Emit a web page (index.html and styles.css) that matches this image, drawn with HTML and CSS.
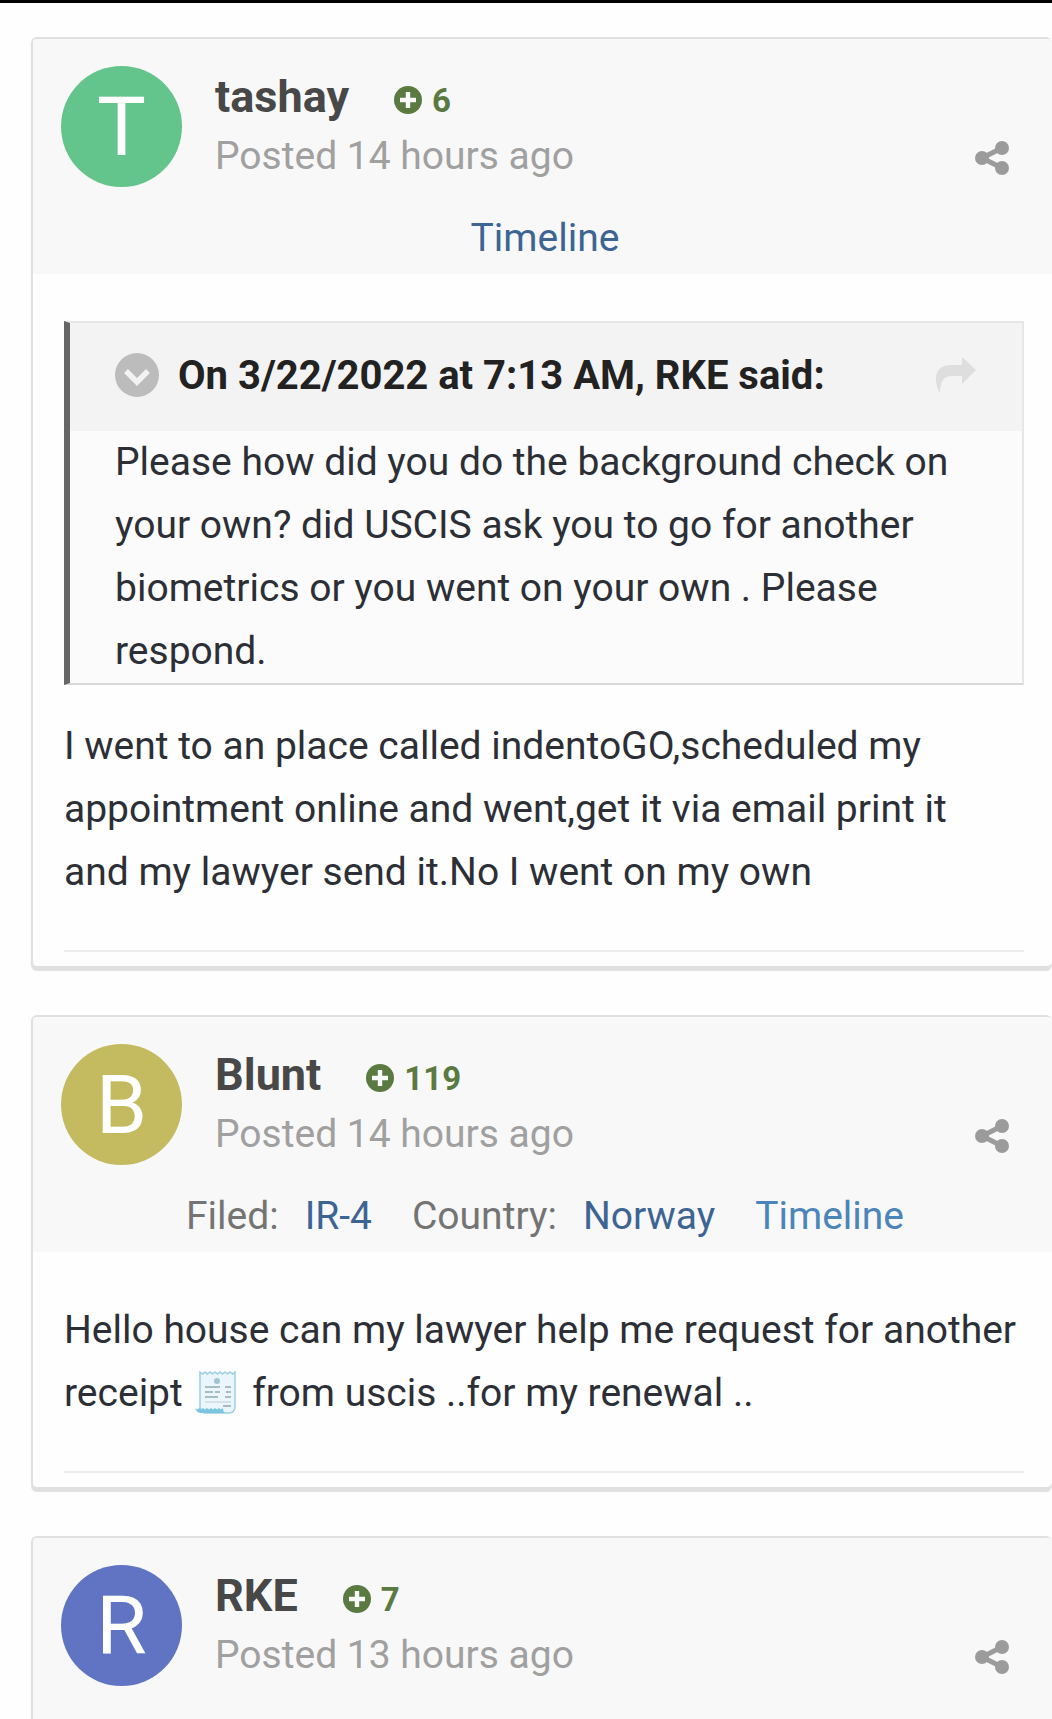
FILE: index.html
```html
<!DOCTYPE html>
<html lang="en">
<head>
    <meta charset="UTF-8">
    <meta name="viewport" content="width=device-width, initial-scale=1.0">
    <title>Forum topic</title>
    <link rel="stylesheet" href="styles.css">
</head>
<body>
    <!-- shared icons -->
    <svg class="icon-defs" aria-hidden="true">
        <symbol id="icon-plus" viewBox="0 0 28 28">
            <circle cx="14" cy="14" r="14" fill="currentColor"/>
            <path d="M14 6v16M6 14h16" stroke="#f8f8f8" stroke-width="4.4"/>
        </symbol>
        <symbol id="icon-share" viewBox="0 0 34 34">
            <path d="M27 7L7 17l20 10" fill="none" stroke="currentColor" stroke-width="5"/>
            <circle cx="27" cy="7" r="7" fill="currentColor"/>
            <circle cx="7" cy="17" r="7" fill="currentColor"/>
            <circle cx="27" cy="27" r="7" fill="currentColor"/>
        </symbol>
    </svg>

    <main class="feed">
        <article class="post">
            <header class="post-header">
                <div class="author">
                    <a class="avatar avatar-green" href="#tashay">T</a>
                    <div class="author-info">
                        <div class="author-line">
                            <a class="author-name" href="#tashay">tashay</a>
                            <span class="reputation"><svg class="plus"><use href="#icon-plus"/></svg>6</span>
                        </div>
                        <a class="posted" href="#post-1">Posted 14 hours ago</a>
                    </div>
                    <button class="share" type="button" aria-label="Share"><svg class="share-icon"><use href="#icon-share"/></svg></button>
                </div>
                <div class="meta">
                    <a href="#timeline">Timeline</a>
                </div>
            </header>
            <div class="post-body">
                <blockquote class="quote">
                    <div class="quote-header">
                        <button class="quote-toggle" type="button" aria-label="Collapse quote">
                            <svg class="toggle-icon" viewBox="0 0 44 44">
                                <circle cx="22" cy="22" r="22" fill="#bcbcbc"/>
                                <path d="M11 18l11 11 11-11" fill="none" stroke="#f3f3f3" stroke-width="5.5"/>
                            </svg>
                        </button>
                        <span class="quote-title">On 3/22/2022 at 7:13 AM, RKE said:</span>
                        <a class="quote-link" href="#quoted" aria-label="Go to quoted post">
                            <svg class="reply-icon" viewBox="0 0 40 36">
                                <path d="M26 0l14 13-14 14v-8H16C8 19 4 24 4 36 1 31 0 27 0 22 0 12 6 8 16 8h10z" fill="#dedede"/>
                            </svg>
                        </a>
                    </div>
                    <p class="quote-text">Please how did you do the background check on your own? did USCIS ask you to go for another biometrics or you went on your own . Please respond.</p>
                </blockquote>
                <p class="post-text">I went to an place called indentoGO,scheduled my appointment online and went,get it via email print it<br>and my lawyer send it.No I went on my own</p>
            </div>
        </article>

        <article class="post">
            <header class="post-header">
                <div class="author">
                    <a class="avatar avatar-olive" href="#blunt">B</a>
                    <div class="author-info">
                        <div class="author-line">
                            <a class="author-name" href="#blunt">Blunt</a>
                            <span class="reputation"><svg class="plus"><use href="#icon-plus"/></svg>119</span>
                        </div>
                        <a class="posted" href="#post-2">Posted 14 hours ago</a>
                    </div>
                    <button class="share" type="button" aria-label="Share"><svg class="share-icon"><use href="#icon-share"/></svg></button>
                </div>
                <div class="meta">
                    <span class="meta-item">Filed: <a href="#ir-4">IR-4</a></span>
                    <span class="meta-item">Country: <a href="#norway">Norway</a></span>
                    <a class="light" href="#timeline">Timeline</a>
                </div>
            </header>
            <div class="post-body">
                <p class="post-text">Hello house can my lawyer help me request for another receipt <svg class="receipt" viewBox="0 0 50 44" role="img" aria-label="receipt">
                    <path d="M8 2l2.500 2L13 2l2.500 2L18 2l2.500 2L23 2l2.500 2L28 2l2.500 2L33 2l2.500 2L38 2l2.500 2L43 2v34c0 5-2 7-6 7H12L8 38z" fill="#eaf6fb" stroke="#9ccfe2" stroke-width="1.500"/>
                    <path d="M3 38l2 1.500L7 38l2 1.500 2-1.500 2 1.500 2-1.500 2 1.500 2-1.500 2 1.500 2-1.500 2 1.500 2-1.500 2 1.500 2-1.500c0 3 1 5 4 5H10c-4 0-6-2-7-5z" fill="#7cc5e2"/>
                    <circle cx="25" cy="11" r="3" fill="#9fc4d2"/>
                    <path d="M13 17h15M33 17h6M13 22h8M23 22h5M34 22h5M13 27h13M33 27h6" stroke="#93a9b5" stroke-width="1.500"/>
                    <path d="M13 32h26" stroke="#c3cdd2" stroke-width="1"/>
                    <path d="M31 36h8" stroke="#93a9b5" stroke-width="1.500"/>
                </svg> from uscis ..for my renewal ..</p>
            </div>
        </article>

        <article class="post">
            <header class="post-header">
                <div class="author">
                    <a class="avatar avatar-blue" href="#rke">R</a>
                    <div class="author-info">
                        <div class="author-line">
                            <a class="author-name" href="#rke">RKE</a>
                            <span class="reputation"><svg class="plus"><use href="#icon-plus"/></svg>7</span>
                        </div>
                        <a class="posted" href="#post-3">Posted 13 hours ago</a>
                    </div>
                    <button class="share" type="button" aria-label="Share"><svg class="share-icon"><use href="#icon-share"/></svg></button>
                </div>
            </header>
        </article>
    </main>
</body>
</html>
```
FILE: styles.css
```css
* {
    margin: 0;
    padding: 0;
    box-sizing: border-box;
}

body {
    background: #fefefe;
    color: #2d2f36;
    font-family: Roboto, "Liberation Sans", sans-serif;
    font-size: 39px;
}

a {
    color: #3d6594;
    text-decoration: none;
}

button {
    background: none;
    border: 0;
    cursor: pointer;
}

svg {
    display: block;
}

.icon-defs {
    display: none;
}

.feed {
    height: 100vh;
    overflow: hidden;
    border-top: 3px solid #000;
    padding: 34px 0 0 31px;
    display: flex;
    flex-direction: column;
    gap: 47px;
}

/* post card */
.post {
    flex-shrink: 0;
    border: 2px solid #e0e0e0;
    border-right: 0;
    border-radius: 6px;
    box-shadow: 0 3px 1px #e0e0e0;
    background: #fefefe;
}

.post-header {
    min-height: 235px;
    padding: 27px 43px 12px 28px;
    background: #f8f8f8;
    border-radius: 4px 4px 0 0;
}

.author {
    display: flex;
    gap: 33px;
}

.avatar {
    width: 121px;
    height: 121px;
    border-radius: 50%;
    color: #fff;
    font-size: 82px;
    line-height: 123px;
    text-align: center;
}

.avatar-green {
    background: #63c48c;
}

.avatar-olive {
    background: #c4bb61;
}

.avatar-blue {
    background: #6074c3;
}

.author-info {
    flex: 1;
    padding-top: 3px;
}

.author-line {
    display: flex;
    align-items: baseline;
    gap: 45px;
    height: 56px;
    line-height: 56px;
}

.author-name {
    color: #484848;
    font-size: 45px;
    font-weight: 700;
}

.reputation {
    color: #5a7a42;
    font-size: 33px;
    font-weight: 700;
}

.plus {
    display: inline-block;
    width: 28px;
    height: 28px;
    margin-right: 10px;
    vertical-align: -2px;
}

.posted {
    display: block;
    color: #a0a0a0;
    line-height: 62px;
}

.share {
    align-self: flex-end;
    margin-bottom: 12px;
    color: #9b9b9b;
}

.share-icon {
    width: 34px;
    height: 34px;
}

.meta {
    display: flex;
    justify-content: center;
    gap: 40px;
    margin-top: 27px;
    margin-right: -20px;
    color: #747474;
    line-height: 48px;
}

.meta-item {
    display: flex;
    gap: 26px;
}

.meta .light {
    color: #4c86b8;
}

/* post content */
.post-body {
    margin: 47px 28px 14px 31px;
    padding-bottom: 46px;
    border-bottom: 2px solid #ededed;
}

.post-text,
.quote-text {
    line-height: 63px;
}

.quote {
    margin-bottom: 30px;
    border: 2px solid #e6e6e6;
    border-bottom-color: #d8d8d8;
    border-left: 6px solid #666;
    background: #fbfbfb;
}

.quote-header {
    display: flex;
    align-items: center;
    height: 108px;
    padding: 0 46px 4px 45px;
    background: #f3f3f3;
}

.toggle-icon {
    width: 44px;
    height: 44px;
}

.quote-title {
    flex: 1;
    padding-left: 19px;
    color: #222;
    font-size: 40px;
    font-weight: 700;
}

.reply-icon {
    width: 40px;
    height: 36px;
}

.quote-text {
    padding: 0 46px 0 45px;
}

.receipt {
    display: inline-block;
    width: 50px;
    height: 44px;
    vertical-align: -8px;
}
```
